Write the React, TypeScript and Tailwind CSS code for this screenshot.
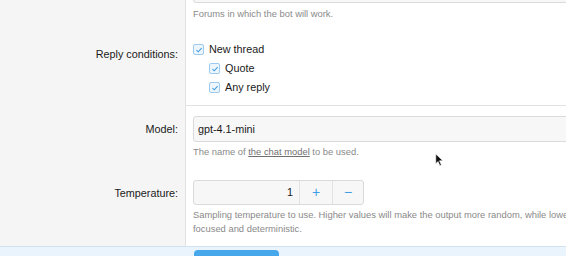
import type { ReactNode } from 'react'

const font = { fontFamily: '"Liberation Sans", Arial, Helvetica, sans-serif' }

function Check({ label }: { label: string }) {
  return (
    <label className="flex h-[19px] items-center gap-[5px] text-[10.8px] text-[#1a1a1a]">
      <span className="flex h-[11px] w-[11px] items-center justify-center rounded-[2px] border border-[#9ccaf0] bg-[#eef6fd]">
        <svg viewBox="0 0 10 10" className="h-[8px] w-[8px]">
          <path d="M1.8 5.2 L4 7.3 L8.3 2.6" fill="none" stroke="#3f9de6" strokeWidth="1.3" />
        </svg>
      </span>
      {label}
    </label>
  )
}

function Row({ label, labelPad, children, className }: { label?: string; labelPad?: string; children: ReactNode; className?: string }) {
  return (
    <div className="flex">
      <div className={`w-[186px] shrink-0 border-r border-[#e2e2e2] bg-[#f5f5f5] pr-[7px] text-right text-[10.8px] leading-[19px] text-[#1a1a1a] ${labelPad ?? ''}`}>
        {label}
      </div>
      <div className={`flex-1 pl-[7px] ${className ?? ''}`}>{children}</div>
    </div>
  )
}

export default function App() {
  return (
    <div className="relative h-[256px] w-[566px] overflow-hidden bg-white" style={font}>
      <Row className="pb-[9px]">
        <div className="-mt-[23px] h-[26px] w-[420px] rounded-[3px] border border-[#dadada] bg-[#f7f7f7]" />
        <p className="mt-[4px] text-[9.4px] leading-[14px] text-[#8a8a8a]">Forums in which the bot will work.</p>
      </Row>

      <Row label="Reply conditions:" labelPad="pt-[15px]" className="border-b border-[#e2e2e2] pb-[8px] pt-[10px]">
        <Check label="New thread" />
        <div className="pl-[16px]">
          <Check label="Quote" />
          <Check label="Any reply" />
        </div>
      </Row>

      <Row label="Model:" labelPad="pt-[14px]" className="pb-[10px] pt-[10px]">
        <div className="flex h-[26px] w-[420px] items-center rounded-[3px] border border-[#dadada] bg-[#f7f7f7] pl-[4px] text-[10.8px] text-[#1a1a1a]">
          gpt-4.1-mini
        </div>
        <p className="mt-[3px] text-[9.4px] leading-[14px] text-[#8a8a8a]">
          The name of <span className="text-[#6f6f6f] underline">the chat model</span> to be used.
        </p>
      </Row>

      <Row label="Temperature:" labelPad="pt-[15px]" className="pb-[10px] pt-[11px]">
        <div className="flex h-[25px] w-[171px] rounded-[3px] border border-[#dadada] bg-[#f7f7f7] text-[10.8px]">
          <div className="flex flex-1 items-center justify-end pr-[6px] text-[#1a1a1a]">1</div>
          <div className="flex w-[33px] items-center justify-center border-l border-[#e2e2e2] text-[14px] text-[#3f9de6]">+</div>
          <div className="flex w-[31px] items-center justify-center border-l border-[#e2e2e2] text-[14px] text-[#3f9de6]">−</div>
        </div>
        <p className="mt-[3px] whitespace-nowrap text-[9.4px] leading-[14px] text-[#8a8a8a]">
          Sampling temperature to use. Higher values will make the output more random, while lower values will make it more
          <br />
          focused and deterministic.
        </p>
      </Row>

      <div className="h-[20px] border-t border-[#d3e2ee] bg-[#eaf4fc] pl-[194px] pt-[3px]">
        <div className="h-[30px] w-[85px] rounded-[4px] bg-[#47a7eb]" />
      </div>

      <svg viewBox="0 0 12 18" className="absolute left-[435px] top-[153px] h-[14px] w-[9px]">
        <path d="M1 1 L1 14 L4 11 L6.5 16.5 L8.5 15.5 L6 10 L10.5 10 Z" fill="#111" stroke="#fff" strokeWidth="0.8" />
      </svg>
    </div>
  )
}
